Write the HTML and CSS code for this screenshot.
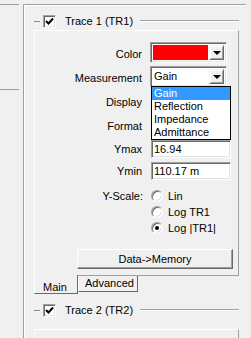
FILE: index.html
```html
<!DOCTYPE html>
<html>
    <head>
        <meta charset="UTF-8">
        <link rel="stylesheet" href="styles.css">
    </head>
    <body>
        <div class="sidebar"><div class="sidebarBox"></div></div>

        <div class="scroller">
            <div class="trace">
                <div class="traceHead">
                    <span class="dash"></span>
                    <span class="check"><svg width="9" height="9" viewBox="0 0 9 9"><polyline points="1,4 3.5,6.5 8,1.5" fill="none" stroke="#000" stroke-width="2"/></svg></span>
                    <span class="traceTitle">Trace 1 (TR1)</span>
                    <span class="traceRule"></span>
                </div>

                <div class="tabPage">
                    <div class="field">
                        <label>Color</label>
                        <div class="combo">
                            <div class="comboValue swatch"></div>
                            <div class="comboBtn"><span class="arrow"></span></div>
                        </div>
                    </div>
                    <div class="field">
                        <label>Measurement</label>
                        <div class="combo">
                            <div class="comboValue">Gain</div>
                            <div class="comboBtn"><span class="arrow"></span></div>
                            <ul class="comboList">
                                <li class="selected">Gain</li>
                                <li>Reflection</li>
                                <li>Impedance</li>
                                <li>Admittance</li>
                            </ul>
                        </div>
                    </div>
                    <div class="field"><label>Display</label></div>
                    <div class="field"><label>Format</label></div>
                    <div class="field short">
                        <label>Ymax</label>
                        <div class="textbox">16.94</div>
                    </div>
                    <div class="field short">
                        <label>Ymin</label>
                        <div class="textbox">110.17 m</div>
                    </div>

                    <div class="radioGroup">
                        <div class="radioRow"><span class="radioLabel">Y-Scale:</span><span class="radio"></span><span>Lin</span></div>
                        <div class="radioRow"><span class="radioLabel"></span><span class="radio"></span><span>Log TR1</span></div>
                        <div class="radioRow"><span class="radioLabel"></span><span class="radio checked"></span><span>Log |TR1|</span></div>
                    </div>

                    <button class="btn">Data-&gt;Memory</button>
                </div>

                <div class="tabs">
                    <div class="tab tabSelected">Main</div>
                    <div class="tab">Advanced</div>
                </div>
            </div>

            <div class="trace">
                <div class="traceHead">
                    <span class="dash"></span>
                    <span class="check"><svg width="9" height="9" viewBox="0 0 9 9"><polyline points="1,4 3.5,6.5 8,1.5" fill="none" stroke="#000" stroke-width="2"/></svg></span>
                    <span class="traceTitle">Trace 2 (TR2)</span>
                    <span class="traceRule"></span>
                </div>
                <div class="tabPage stub"></div>
            </div>
        </div>
    </body>
</html>
```

FILE: styles.css
```css
body {
    margin: 0;
    width: 251px;
    height: 338px;
    overflow: hidden;
    display: flex;
    background: #f0f0f0;
    font-family: "Liberation Sans", Arial, sans-serif;
    font-size: 11px;
    line-height: 13px;
    color: #000000;
}

.sidebar {
    width: 23px;
    flex: none;
}

.sidebarBox {
    width: 19px;
    height: 84px;
    margin-top: 4px;
    border-top: 1px solid #a0a0a0;
    border-bottom: 1px solid #a0a0a0;
}

.scroller {
    flex: 1;
    margin: 4px 5px 0 0;
    padding-left: 10px;
    border-top: 1px solid #a0a0a0;
    border-left: 1px solid #a0a0a0;
    box-shadow: inset 1px 1px 0 #ffffff;
}

.trace {
    width: 205px;
}

.traceHead {
    display: flex;
    align-items: center;
    height: 14px;
    margin-top: 9px;
}

.dash {
    width: 6px;
    height: 1px;
    margin-right: 3px;
    background: #8a8a8a;
}

.check {
    width: 13px;
    height: 13px;
    box-sizing: border-box;
    display: flex;
    align-items: center;
    justify-content: center;
    background: #ffffff;
    border: 1px solid;
    border-color: #a0a0a0 #ffffff #ffffff #a0a0a0;
    box-shadow: inset 1px 1px 0 #696969, inset -1px -1px 0 #e3e3e3;
}

.traceTitle {
    margin-left: 9px;
    white-space: nowrap;
}

.traceRule {
    flex: 1;
    height: 0;
    margin-left: 7px;
    border-top: 1px solid #a0a0a0;
    border-bottom: 1px solid #ffffff;
}

.tabPage {
    margin-top: 2px;
    padding: 11px 0 6px 0;
    border: 1px solid;
    border-color: #ffffff #a0a0a0 #a0a0a0 #ffffff;
}

.tabPage.stub {
    margin-top: 12px;
    padding: 0;
    height: 8px;
    border-bottom: none;
}

.field {
    display: grid;
    grid-template-columns: 107px 1fr;
    column-gap: 8px;
    height: 24px;
}

.field label {
    text-align: right;
    align-self: center;
    white-space: nowrap;
}

.field.short {
    height: 22px;
}

.combo {
    position: relative;
    width: 77px;
    height: 21px;
    box-sizing: border-box;
    display: flex;
    padding: 2px;
    background: #ffffff;
    border: 1px solid;
    border-color: #a0a0a0 #ffffff #ffffff #a0a0a0;
    box-shadow: inset 1px 1px 0 #696969, inset -1px -1px 0 #e3e3e3;
}

.comboValue {
    flex: 1;
    padding-left: 1px;
    line-height: 15px;
}

.swatch {
    margin: 0 1px 0 0;
    background: #ff0000;
}

.comboBtn {
    width: 15px;
    display: flex;
    align-items: center;
    justify-content: center;
    box-sizing: border-box;
    background: #f0f0f0;
    border: 1px solid;
    border-color: #f0f0f0 #696969 #696969 #f0f0f0;
    box-shadow: inset 1px 1px 0 #ffffff, inset -1px -1px 0 #a0a0a0;
}

.arrow {
    width: 0;
    height: 0;
    border-left: 4px solid transparent;
    border-right: 4px solid transparent;
    border-top: 4px solid #000000;
    margin-top: 1px;
}

.comboList {
    position: absolute;
    top: 100%;
    left: 0;
    width: 80px;
    box-sizing: border-box;
    margin: 0;
    padding: 0;
    list-style: none;
    background: #ffffff;
    border: 1px solid #000000;
    z-index: 2;
}

.comboList li {
    height: 13px;
    padding-left: 2px;
}

.comboList li.selected {
    background: #3399ff;
    color: #ffffff;
}

.textbox {
    align-self: center;
    width: 80px;
    height: 18px;
    margin-left: 1px;
    box-sizing: border-box;
    padding: 1px 0 0 2px;
    background: #ffffff;
    border: 1px solid;
    border-color: #a0a0a0 #ffffff #ffffff #a0a0a0;
    box-shadow: inset 1px 1px 0 #696969, inset -1px -1px 0 #e3e3e3;
    line-height: 14px;
}

.radioGroup {
    margin-top: 6px;
}

.radioRow {
    display: flex;
    align-items: center;
    height: 16px;
}

.radioLabel {
    width: 108px;
    margin-right: 8px;
    text-align: right;
}

.radio {
    position: relative;
    width: 12px;
    height: 12px;
    box-sizing: border-box;
    margin-right: 5px;
    border-radius: 50%;
    background: #ffffff;
    border: 1px solid;
    border-color: #a0a0a0 #ffffff #ffffff #a0a0a0;
    box-shadow: inset 1px 1px 0 #696969, inset -1px -1px 0 #e3e3e3;
}

.radio.checked::after {
    content: "";
    position: absolute;
    left: 3px;
    top: 3px;
    width: 4px;
    height: 4px;
    border-radius: 50%;
    background: #000000;
}

.btn {
    display: block;
    width: 156px;
    height: 20px;
    margin: 13px 0 0 42px;
    padding: 0;
    font-family: "Liberation Sans", Arial, sans-serif;
    font-size: 11px;
    color: #000000;
    background: #f0f0f0;
    border: 1px solid;
    border-color: #ffffff #696969 #696969 #ffffff;
    box-shadow: inset -1px -1px 0 #a0a0a0;
}

.tabs {
    display: flex;
    align-items: flex-start;
}

.tab {
    box-sizing: border-box;
    height: 16px;
    padding: 1px 0 0 6px;
    width: 60px;
    border: 1px solid;
    border-top: none;
    border-color: #ffffff #696969 #696969 #ffffff;
}

.tabSelected {
    width: 44px;
    height: 19px;
    margin-top: -1px;
    padding: 6px 0 0 8px;
    background: #f0f0f0;
}
```
